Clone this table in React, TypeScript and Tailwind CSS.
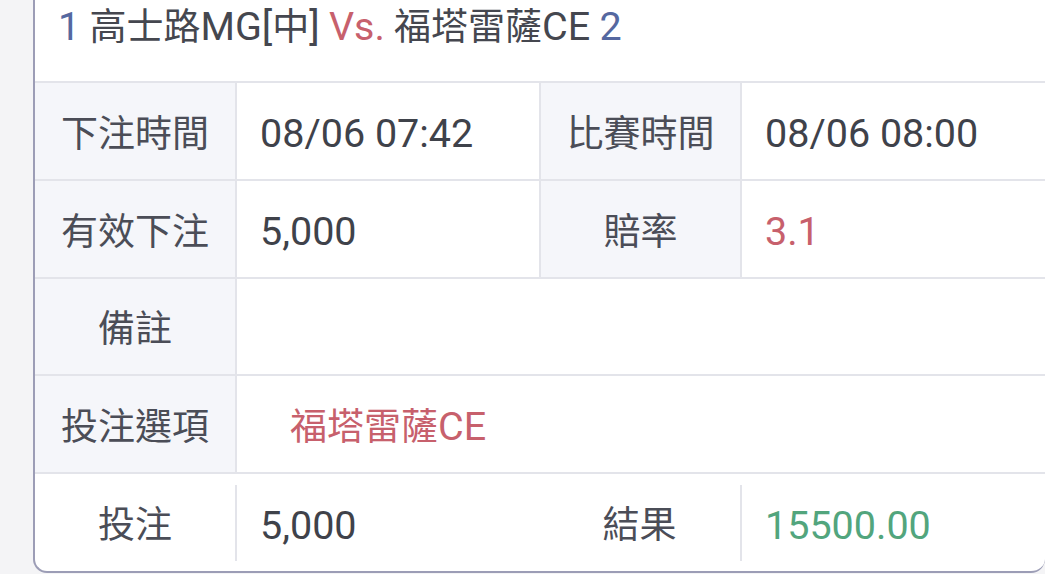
import React from "react";

const label = "flex items-center justify-center bg-[#f5f6fa] text-[#4b4d57] pt-[6px]";
const val = "flex items-center text-[#3f424a] text-[39.5px] pt-[6px]";
const L = "text-[39.5px]";

export default function App() {
  return (
    <div className="h-[574px] w-[1045px] overflow-hidden bg-[#f4f4f6] pl-[33px] font-['Roboto','Noto_Sans_CJK_TC',sans-serif] text-[37px] leading-none">
      <div className="w-[1012px] h-[573px] bg-white border-l-2 border-b-2 border-[#9c9db6] rounded-bl-[14px] rounded-br-[14px] overflow-hidden flex flex-col">
        <div className="h-[83px] shrink-0 border-b-2 border-[#e3e4ea] pl-[23px] pt-[7px] text-[#45474f]">
          <span className={`${L} text-[#5568a0]`}>1</span> 高士路<span className={L}>MG[</span>中<span className={L}>]</span> <span className={`${L} text-[#c7606c]`}>Vs.</span> 福塔雷薩<span className={L}>CE</span> <span className={`${L} text-[#5568a0]`}>2</span>
        </div>
        <div className="h-[98px] shrink-0 flex border-b-2 border-[#e3e4ea]">
          <div className={`${label} w-[202px] border-r-2 border-[#e3e4ea]`}>下注時間</div>
          <div className={`${val} w-[304px] border-r-2 border-[#e3e4ea] pl-[23px]`}>08/06 07:42</div>
          <div className={`${label} w-[201px] border-r-2 border-[#e3e4ea]`}>比賽時間</div>
          <div className={`${val} flex-1 pl-[23px]`}>08/06 08:00</div>
        </div>
        <div className="h-[98px] shrink-0 flex border-b-2 border-[#e3e4ea]">
          <div className={`${label} w-[202px] border-r-2 border-[#e3e4ea]`}>有效下注</div>
          <div className={`${val} w-[304px] border-r-2 border-[#e3e4ea] pl-[23px]`}>5,000</div>
          <div className={`${label} w-[201px] border-r-2 border-[#e3e4ea]`}>賠率</div>
          <div className={`${val} flex-1 pl-[23px] text-[#c7606c]`}>3.1</div>
        </div>
        <div className="h-[97px] shrink-0 flex border-b-2 border-[#e3e4ea]">
          <div className={`${label} w-[202px] border-r-2 border-[#e3e4ea]`}>備註</div>
          <div className={`${val} flex-1`}></div>
        </div>
        <div className="h-[98px] shrink-0 flex border-b-2 border-[#e3e4ea]">
          <div className={`${label} w-[202px] border-r-2 border-[#e3e4ea]`}>投注選項</div>
          <div className="flex items-center flex-1 pl-[53px] pt-[6px] text-[#c7606c]">福塔雷薩<span className={L}>CE</span></div>
        </div>
        <div className="flex-1 flex items-center">
          <div className="w-[200px] flex items-center justify-center text-[#4b4d57] pt-[6px]">投注</div>
          <div className="w-[2px] h-[76px] bg-[#e3e4ea]"></div>
          <div className={`${val} w-[302px] pl-[23px]`}>5,000</div>
          <div className="w-[201px] flex items-center justify-center text-[#4b4d57] pt-[6px]">結果</div>
          <div className="w-[2px] h-[76px] bg-[#e3e4ea]"></div>
          <div className={`${val} flex-1 pl-[23px] text-[#52a57d]`}>15500.00</div>
        </div>
      </div>
    </div>
  );
}
